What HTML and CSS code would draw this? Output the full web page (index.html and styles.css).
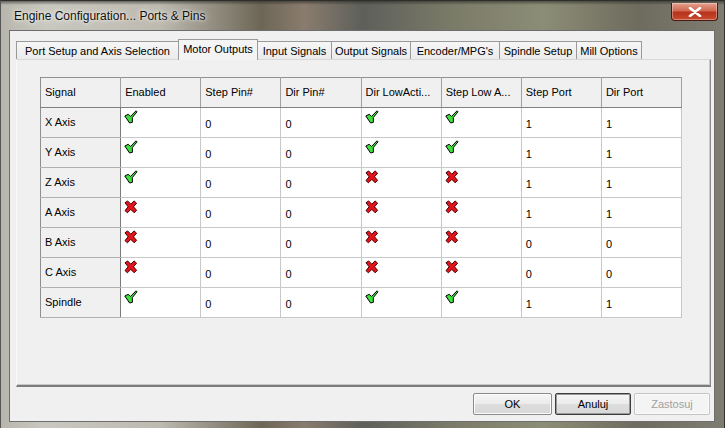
FILE: index.html
```html
<!DOCTYPE html>
<html>
<head>
<meta charset="utf-8">
<link rel="stylesheet" href="styles.css">
</head>
<body>
<div class="window">
  <div class="titlebar">
    <span class="title">Engine Configuration... Ports &amp; Pins</span>
    <div class="close"><svg width="14" height="10" viewBox="0 0 14 10"><path d="M2 1 L12 9 M12 1 L2 9" stroke="#fff" stroke-width="2.6" stroke-linecap="round"/></svg></div>
  </div>
  <div class="client">
    <div class="tabs">
      <div class="tab w1">Port Setup and Axis Selection</div>
      <div class="tab active w2">Motor Outputs</div>
      <div class="tab w3">Input Signals</div>
      <div class="tab w4">Output Signals</div>
      <div class="tab w5">Encoder/MPG's</div>
      <div class="tab w6">Spindle Setup</div>
      <div class="tab w7">Mill Options</div>
    </div>
    <div class="panel">
      <table class="grid">
        <thead>
          <tr><th>Signal</th><th>Enabled</th><th>Step Pin#</th><th>Dir Pin#</th><th>Dir LowActi...</th><th>Step Low A...</th><th>Step Port</th><th>Dir Port</th></tr>
        </thead>
        <tbody id="rows"></tbody>
      </table>
    </div>
    <div class="buttons">
      <button class="btn">OK</button>
      <button class="btn def">Anuluj</button>
      <button class="btn dis">Zastosuj</button>
    </div>
  </div>
</div>
<script>
var ok='<svg class="ic" width="14" height="14" viewBox="0 0 14 14"><path d="M0.8 6 L4.2 4.3 L6.6 6.4 L12 0.8 L13 1.8 L8.3 7.6 L8.4 12.3 L5.6 13 Z" fill="#3ee03c" stroke="#000" stroke-width="1" stroke-linejoin="round"/></svg>';
var no='<svg class="ic" width="14" height="14" viewBox="0 0 14 14"><path d="M1 2.8 L3.6 0.9 L6.8 4.2 L10 0.9 L12.6 3.2 L9.5 6.8 L12.6 10.3 L10.2 12.8 L6.8 9.4 L3.4 12.8 L1 10.6 L4.1 6.8 Z" fill="#e0141a" stroke="#4a0000" stroke-width="1" stroke-linejoin="round"/></svg>';
var data=[
 ["X Axis",1,0,0,1,1,1,1],
 ["Y Axis",1,0,0,1,1,1,1],
 ["Z Axis",1,0,0,0,0,1,1],
 ["A Axis",0,0,0,0,0,1,1],
 ["B Axis",0,0,0,0,0,0,0],
 ["C Axis",0,0,0,0,0,0,0],
 ["Spindle",1,0,0,1,1,1,1]
];
var h='';
data.forEach(function(r){
 h+='<tr><th>'+r[0]+'</th>';
 h+='<td class="icc">'+(r[1]?ok:no)+'</td>';
 h+='<td>'+r[2]+'</td><td>'+r[3]+'</td>';
 h+='<td class="icc">'+(r[4]?ok:no)+'</td>';
 h+='<td class="icc">'+(r[5]?ok:no)+'</td>';
 h+='<td>'+r[6]+'</td><td>'+r[7]+'</td></tr>';
});
document.getElementById('rows').innerHTML=h;
</script>
</body>
</html>
```
FILE: styles.css
```css
html, body {
  margin: 0;
  padding: 0;
}
body {
  width: 725px;
  height: 428px;
  overflow: hidden;
  font-family: "Liberation Sans", Arial, sans-serif;
  font-size: 11px;
  color: #000;
  background: linear-gradient(90deg, #4a4a3e 0%, #7b7a6c 30%, #5d5d55 60%, #6b6f5c 85%, #3a3a34 100%);
}
.window {
  width: 725px;
  height: 428px;
  display: flex;
  flex-direction: column;
  box-sizing: border-box;
  background:
    linear-gradient(180deg, rgba(40,40,36,0.6) 0px, rgba(40,40,36,0) 4px),
    linear-gradient(90deg, #b8b6ac 0px, #c9c8c0 6%, #bdbab0 22%, #6d6656 36%, #8a7c6e 42%, #5e5f5a 50%, #7a7a68 62%, #8c8d76 75%, #6e6c5e 88%, #7f7c72 100%);
  border-top: 1px solid #2e2e2a;
  border-left: 1px solid #555;
  border-right: 1px solid #333;
}
.titlebar {
  height: 29px;
  flex: none;
  display: flex;
  align-items: flex-start;
  justify-content: space-between;
  padding-left: 13px;
  padding-right: 6px;
  box-sizing: border-box;
}
.title {
  font-size: 12px;
  margin-top: 8px;
  color: #101010;
  text-shadow: 0 0 6px rgba(255,255,255,0.9), 0 0 3px rgba(255,255,255,0.8);
}
.close {
  width: 45px;
  height: 17px;
  margin-top: 2px;
  border: 1px solid #4a1a12;
  border-top: none;
  border-radius: 0 0 4px 4px;
  background: linear-gradient(180deg, #e6a08e 0%, #d06a52 45%, #b8321c 55%, #c74b2e 100%);
  display: flex;
  align-items: center;
  justify-content: center;
  box-shadow: inset 0 0 0 1px rgba(255,255,255,0.35);
}
.client {
  flex: 1;
  margin: 0 9px 6px 8px;
  background: #f0f0f0;
  border: 1px solid #6d6d6d;
  display: flex;
  flex-direction: column;
  padding: 8px 4px 0 6px;
}
.tabs {
  display: flex;
  align-items: flex-end;
  height: 20px;
  position: relative;
  z-index: 1;
}
.tab {
  height: 18px;
  box-sizing: border-box;
  border: 1px solid #9a9a9a;
  border-bottom: none;
  border-right: none;
  background: linear-gradient(180deg, #f6f6f6, #ebebeb);
  display: flex;
  align-items: center;
  justify-content: center;
  white-space: nowrap;
}
.tab.w1 { width: 162px; }
.tab.w2 { width: 80px; }
.tab.w3 { width: 74px; }
.tab.w4 { width: 79px; }
.tab.w5 { width: 89px; }
.tab.w6 { width: 77px; }
.tab.w7 { width: 66px; border-right: 1px solid #9a9a9a; }
.tab.active {
  height: 21px;
  background: #f4f4f4;
  border-color: #9a9a9a;
  border-right: 1px solid #9a9a9a;
  margin-right: -1px;
  padding-bottom: 2px;
  position: relative;
  top: 1px;
}
.panel {
  width: 695px;
  height: 328px;
  box-sizing: border-box;
  border-top: 1px solid #d8d8d8;
  border-left: 1px solid #fafafa;
  border-right: 1px solid #8a8a8a;
  border-bottom: 2px solid #7c7c7c;
  box-shadow: inset -1px -1px 0 #c8c8c8;
  background: #f0f0f0;
  padding: 17px 0 0 23px;
}
.grid {
  border-collapse: collapse;
  table-layout: fixed;
  width: 642px;
  border: 1px solid #8f8f8f;
}
.grid th, .grid td {
  width: 79px;
  box-sizing: border-box;
  padding: 0 0 0 4px;
  text-align: left;
  font-weight: normal;
  white-space: nowrap;
  overflow: hidden;
}
.grid thead th {
  background: #f0f0f0;
  border-right: 1px solid #a0a0a0;
  border-bottom: 1px solid #808080;
  height: 30px;
  padding-bottom: 2px;
  vertical-align: middle;
}
.grid tbody th {
  background: #f0f0f0;
  border-right: 1px solid #7a7a7a;
  border-bottom: 1px solid #b0b0b0;
  height: 30px;
  padding-bottom: 1px;
}
.grid td {
  background: #fff;
  border-right: 1px solid #c8c8c8;
  border-bottom: 1px solid #c8c8c8;
  height: 30px;
  padding-top: 2px;
}
.grid td.icc {
  vertical-align: top;
  padding-top: 2px;
  padding-left: 3px;
}
.ic { display: block; }
.buttons {
  display: flex;
  justify-content: flex-end;
  gap: 3px;
  padding-top: 6px;
  padding-right: 0;
}
.btn {
  width: 79px;
  height: 22px;
  font-family: "Liberation Sans", Arial, sans-serif;
  font-size: 11px;
  color: #000;
  background: linear-gradient(180deg, #f6f6f6 0%, #ebebeb 48%, #dddddd 52%, #d8d8d8 100%);
  border: 1px solid #8a8a8a;
  border-radius: 2px;
  padding: 0;
  box-shadow: inset 0 0 0 1px #fcfcfc;
}
.btn.def {
  width: 76px;
  border: 1px solid #3c3c3c;
  box-shadow: inset 0 0 0 1px #9a9a9a;
}
.btn.dis {
  width: 76px;
  color: #a0a0a0;
  background: #f4f4f4;
  border-color: #c4c4c4;
}
```
